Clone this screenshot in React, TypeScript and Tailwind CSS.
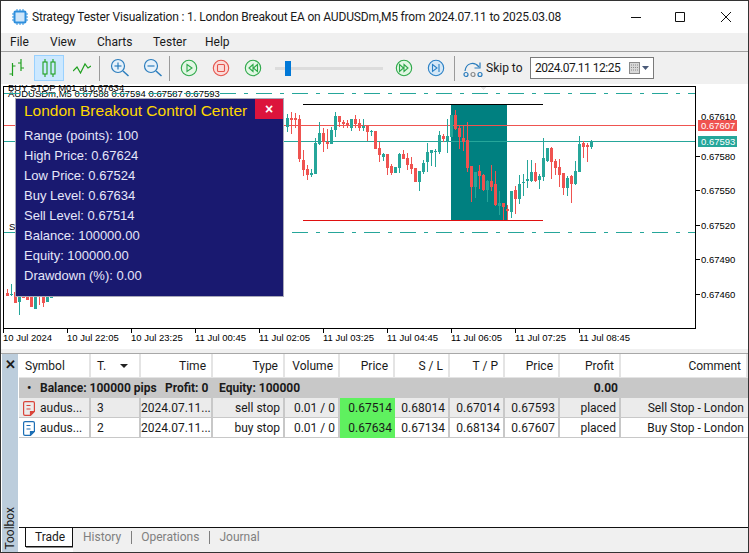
const ui = { fontFamily: 'Roboto, "Noto Sans", sans-serif' };

// [body top, body bottom, wick top, wick bottom, colour], y values measured at 3x from the chart's top
type Candle = [number, number, number, number, 'r' | 't'];

const candles: Candle[] = [
  [98, 126, 87, 140, 't'], [98, 105, 82, 147, 'r'], [98, 105, 85, 130, 'r'], [102, 222, 90, 232, 'r'],
  [225, 255, 195, 272, 'r'], [252, 270, 240, 285, 'r'], [263, 270, 252, 275, 't'], [174, 267, 158, 267, 't'],
  [144, 177, 111, 180, 't'], [144, 171, 130, 201, 'r'], [171, 177, 132, 192, 'r'], [135, 177, 125, 177, 't'],
  [93, 135, 81, 156, 't'], [93, 111, 93, 126, 'r'], [110, 117, 104, 129, 'r'], [114, 123, 105, 129, 'r'],
  [102, 129, 102, 138, 't'], [102, 117, 90, 129, 'r'], [114, 129, 102, 138, 'r'], [123, 129, 102, 138, 't'],
  [123, 141, 120, 168, 'r'], [137, 140, 135, 153, 't'], [138, 192, 138, 192, 'r'], [189, 210, 171, 231, 'r'],
  [207, 216, 204, 228, 't'], [207, 249, 207, 270, 'r'], [243, 264, 237, 270, 'r'], [246, 264, 246, 264, 't'],
  [207, 249, 204, 264, 't'], [207, 222, 195, 222, 'r'], [219, 240, 204, 255, 'r'], [237, 252, 216, 267, 'r'],
  [249, 291, 249, 291, 'r'], [258, 291, 258, 318, 't'], [234, 261, 225, 267, 't'], [201, 231, 174, 261, 't'],
  [195, 204, 195, 243, 't'], [198, 201, 192, 246, 't'], [150, 201, 138, 207, 't'], [153, 162, 147, 171, 'r'],
  [153, 171, 102, 204, 't'], [90, 156, 90, 156, 't'], [90, 132, 75, 135, 'r'], [129, 156, 120, 192, 'r'],
  [159, 171, 120, 198, 'r'], [165, 249, 111, 261, 'r'], [243, 306, 243, 351, 'r'], [261, 306, 261, 339, 't'],
  [258, 273, 240, 312, 'r'], [270, 315, 267, 318, 'r'], [288, 315, 285, 351, 't'], [288, 306, 240, 318, 'r'],
  [297, 360, 258, 363, 'r'], [354, 363, 318, 390, 't'], [354, 366, 354, 405, 'r'], [372, 378, 360, 405, 'r'],
  [318, 381, 318, 399, 't'], [315, 342, 303, 387, 'r'], [297, 342, 270, 357, 't'], [290, 293, 267, 333, 't'],
  [282, 288, 225, 309, 't'], [261, 288, 225, 291, 't'], [261, 288, 234, 291, 'r'], [273, 285, 267, 312, 't'],
  [219, 276, 159, 288, 't'], [189, 228, 189, 231, 't'], [189, 231, 186, 282, 'r'], [228, 249, 222, 270, 'r'],
  [246, 270, 222, 306, 'r'], [264, 309, 264, 330, 'r'], [279, 309, 273, 333, 't'], [273, 297, 270, 354, 'r'],
  [258, 297, 228, 300, 't'], [177, 261, 153, 261, 't'], [174, 186, 168, 219, 'r'], [180, 186, 174, 231, 'r'],
  [168, 186, 165, 192, 't'],
];

const leftCandles: Candle[] = [
  [625, 632, 612, 632, 'r'], [626, 629, 598, 632, 't'], [620, 654, 620, 654, 'r'], [620, 650, 620, 690, 't'],
  [620, 640, 620, 640, 'r'], [620, 645, 620, 645, 'r'], [620, 666, 620, 666, 'r'], [620, 672, 620, 672, 't'],
  [620, 622, 620, 660, 'r'], [620, 654, 620, 665, 'r'], [620, 650, 620, 650, 't'], [620, 640, 620, 640, 't'],
];

const priceLabels = [
  { y: 156, text: '0.67580' },
  { y: 190, text: '0.67550' },
  { y: 225, text: '0.67520' },
  { y: 259, text: '0.67490' },
  { y: 294, text: '0.67460' },
];

const timeLabels = [
  '10 Jul 2024', '10 Jul 22:05', '10 Jul 23:25', '11 Jul 00:45', '11 Jul 02:05',
  '11 Jul 03:25', '11 Jul 04:45', '11 Jul 06:05', '11 Jul 07:25', '11 Jul 08:45',
];

const panelRows = [
  'Range (points): 100',
  'High Price: 0.67624',
  'Low Price: 0.67524',
  'Buy Level: 0.67634',
  'Sell Level: 0.67514',
  'Balance: 100000.00',
  'Equity: 100000.00',
  'Drawdown (%): 0.00',
];

const columns = 'grid grid-cols-[72px_50px_72px_72px_55px_55px_55px_55px_55px_61px_1fr]';

const headers = [
  { label: 'Symbol', className: 'pl-[6px] text-left' },
  { label: 'T.', className: 'pl-[6px] text-left' },
  { label: 'Time', className: 'pr-[5px] text-right' },
  { label: 'Type', className: 'pr-[5px] text-right' },
  { label: 'Volume', className: 'pr-[5px] text-right' },
  { label: 'Price', className: 'pr-[5px] text-right' },
  { label: 'S / L', className: 'pr-[5px] text-right' },
  { label: 'T / P', className: 'pr-[5px] text-right' },
  { label: 'Price', className: 'pr-[5px] text-right' },
  { label: 'Profit', className: 'pr-[5px] text-right' },
  { label: 'Comment', className: 'pr-[5px] text-right' },
];

const orders = [
  { color: '#d9453a', bg: 'bg-[#ebebeb]', id: '3', type: 'sell stop', entry: '0.67514', sl: '0.68014', tp: '0.67014', price: '0.67593', comment: 'Sell Stop - London' },
  { color: '#1c6fb5', bg: 'bg-white', id: '2', type: 'buy stop', entry: '0.67634', sl: '0.67134', tp: '0.68134', price: '0.67607', comment: 'Buy Stop - London' },
];

const CandleMarks = ({ data, startX }: { data: Candle[]; startX: number }) => (
  <>
    {data.map(([top, bottom, wickTop, wickBottom, kind], i) => {
      const x = startX + i * 4;
      const fill = kind === 'r' ? '#ef5350' : '#26a69a';
      const bodyY = Math.round(85 + top / 3);
      const wickY = Math.round(85 + wickTop / 3);
      return (
        <g key={i} fill={fill}>
          <rect x={x} y={wickY} width={1} height={Math.round(85 + wickBottom / 3) - wickY} />
          <rect x={x - 1} y={bodyY} width={3} height={Math.max(1, Math.round(85 + bottom / 3) - bodyY)} />
        </g>
      );
    })}
  </>
);

const Chart = () => (
  <svg viewBox="1 84 747 265" width={747} height={265} className="block overflow-visible" shapeRendering="crispEdges" fontFamily='"Liberation Sans", sans-serif' fontSize={9.5} fill="#000">
    <text x={8} y={91}>BUY STOP M01 at 0.67634</text>
    <rect x={3.5} y={86.5} width={692} height={242} fill="none" stroke="#000" />
    <polygon points="480,87 487,87 483.5,90" fill="#e6e6e6" />
    <text x={8} y={97}>AUDUSDm,M5 0.67588 0.67594 0.67587 0.67593</text>
    <rect x={451} y={105} width={56} height={115} fill="#008080" />
    <line x1={303} x2={543} y1={104.5} y2={104.5} stroke="#000" />
    <line x1={303} x2={543} y1={220.5} y2={220.5} stroke="#e01010" />
    <line x1={4} x2={695} y1={93.5} y2={93.5} stroke="#26a69a" strokeDasharray="16 8 4 8" />
    <line x1={4} x2={695} y1={232.5} y2={232.5} stroke="#26a69a" strokeDasharray="16 8 4 8" />
    <line x1={4} x2={695} y1={125.5} y2={125.5} stroke="#ef5350" />
    <line x1={4} x2={695} y1={141.5} y2={141.5} stroke="#26a69a" />
    <text x={9} y={230}>S</text>
    <rect x={283} y={114} width={1} height={13} fill="#ef5350" />
    <CandleMarks data={candles} startX={287} />
    <CandleMarks data={leftCandles} startX={7} />
    {priceLabels.map((p) => (
      <g key={p.text}>
        <line x1={696} x2={700} y1={p.y + 0.5} y2={p.y + 0.5} stroke="#000" />
        <text x={701} y={p.y + 3.5}>{p.text}</text>
      </g>
    ))}
    <text x={701} y={120}>0.67610</text>
    <rect x={698} y={120} width={39} height={11} fill="#ef5350" />
    <text x={701} y={129} fill="#fff" fontSize={9.5}>0.67607</text>
    <rect x={698} y={136} width={39} height={11} fill="#26a69a" />
    <text x={701} y={145} fill="#fff" fontSize={9.5}>0.67593</text>
    {timeLabels.map((t, i) => (
      <g key={t}>
        <line x1={3.5 + i * 64} x2={3.5 + i * 64} y1={328} y2={333} stroke="#000" />
        <text x={3 + i * 64} y={341}>{t}</text>
      </g>
    ))}
  </svg>
);

const Panel = () => (
  <div className="absolute left-[14px] top-[14px] h-[199px] w-[269px] border border-[#a9a9b8] bg-[#191970]" style={{ fontFamily: '"Liberation Sans", sans-serif' }}>
    <div className="flex h-[25px] justify-between">
      <div className="whitespace-nowrap pl-[8px] pt-[1px] text-[15.500px] leading-[22px] text-[#ffd700]">London Breakout Control Center</div>
      <div className="flex h-[20px] w-[28px] items-center justify-center bg-[#dc143c] text-[14px] font-bold text-white">×</div>
    </div>
    <div className="pl-[8px] pt-[2px]">
      {panelRows.map((r) => (
        <div key={r} className="h-[20px] text-[13px] leading-[20px] text-[#e6e6fa]">{r}</div>
      ))}
    </div>
  </div>
);

const Dot = ({ color, fill, children }: { color: string; fill: string; children: React.ReactNode }) => (
  <svg width={18} height={18} viewBox="0 0 18 18" fill="none" stroke={color} strokeWidth={1.1}>
    <circle cx={9} cy={9} r={7.7} fill={fill} />
    {children}
  </svg>
);

const Magnifier = ({ plus }: { plus?: boolean }) => (
  <svg width={20} height={20} viewBox="0 0 20 20" fill="none" stroke="#2b7dbd" strokeWidth={1.2}>
    <circle cx={8} cy={8} r={6.5} fill="#e6f1fa" />
    <path d="M4.5 8h7" />
    {plus && <path d="M8 4.5v7" />}
    <path d="M13 13l5.5 5" strokeWidth={1.5} />
  </svg>
);

const Sep = ({ className }: { className: string }) => <div className={`h-[25px] w-px bg-[#9a9a9a] ${className}`} />;

const Toolbar = () => (
  <div className="flex h-[32px] items-center bg-[#f0f0f0]">
    <svg width={18} height={20} viewBox="0 0 18 20" fill="none" stroke="#1fa01f" strokeWidth={1.2} className="ml-[7px]">
      <path d="M4.5 5v13M1.500 16h3M4.500 8h3M13 1v12M10 5h3M13 10h3" />
    </svg>
    <div className="ml-[8px] flex h-[26px] w-[30px] items-center justify-center border border-[#99d1ff] bg-[#cce8ff]">
      <svg width={16} height={20} viewBox="0 0 16 20" fill="none" stroke="#1fa01f" strokeWidth={1.1}>
        <path d="M4 1v3M4 16v3M12 1v3M12 16v3" />
        <rect x={2} y={4} width={4} height={12} />
        <rect x={10} y={4} width={4} height={12} />
      </svg>
    </div>
    <svg width={18} height={12} viewBox="0 0 18 12" fill="none" stroke="#1fa01f" strokeWidth={1.2} className="ml-[9px]">
      <path d="M0 9l4-4 3.500 6L12 2l3 4 3-2" />
    </svg>
    <Sep className="ml-[8px]" />
    <div className="ml-[10px]"><Magnifier plus /></div>
    <div className="ml-[13px]"><Magnifier /></div>
    <Sep className="ml-[6px]" />
    <div className="ml-[10px]"><Dot color="#2ea84a" fill="#e2f7e4"><path d="M7 5.500l5 3.500-5 3.500z" /></Dot></div>
    <div className="ml-[14px]"><Dot color="#e5534b" fill="#fbdcda"><rect x={5.500} y={5.500} width={7} height={7} rx={1} /></Dot></div>
    <div className="ml-[14px]"><Dot color="#2ea84a" fill="#e2f7e4"><path d="M9 5.500L5 9l4 3.500zM13.500 5.500L9.500 9l4 3.500z" /></Dot></div>
    <div className="relative ml-[13px] h-[3px] w-[108px] bg-[#dcdcdc]">
      <div className="absolute left-[10px] top-[-6px] h-[15px] w-[6px] bg-[#0078d7]" />
    </div>
    <div className="ml-[12px]"><Dot color="#2ea84a" fill="#e2f7e4"><path d="M4.500 5.500L8.500 9l-4 3.500zM9 5.500L13 9l-4 3.500z" /></Dot></div>
    <div className="ml-[14px]"><Dot color="#2b80c5" fill="#d5e8f7"><path d="M5.500 5.500L10 9l-4.500 3.500zM12 5v8" /></Dot></div>
    <Sep className="ml-[9px]" />
    <svg width={20} height={20} viewBox="0 0 20 20" fill="none" stroke="#2b7dbd" strokeWidth={1.2} className="ml-[8px]">
      <path d="M2 13C3 5 11 3 16 9" />
      <path d="M17 4.500V10h-5.500" />
      <circle cx={3} cy={16.500} r={2} />
      <circle cx={10} cy={16.500} r={2} stroke="#8a8a8a" />
      <circle cx={17} cy={16.500} r={2} />
    </svg>
    <div className="ml-[3px] w-[36px] shrink-0 whitespace-nowrap text-[12px] text-[#1a1a1a]">Skip to</div>
    <div className="ml-[8px] flex h-[22px] w-[124px] shrink-0 items-center justify-between whitespace-nowrap border border-[#7a7a7a] bg-white pl-[4px] pr-[4px] text-[12px] tracking-[-0.5px] text-[#1a1a1a]">
      2024.07.11 12:25
      <svg width={20} height={12} viewBox="0 0 20 12" className="shrink-0">
        <rect x={0.500} y={0.500} width={10} height={11} fill="#d8d8d8" stroke="#8a8a8a" />
        <path d="M2 3h7M2 5.500h7M2 8h7" stroke="#8a8a8a" strokeDasharray="1 1" />
        <path d="M13 4h7l-3.500 4z" fill="#4a5a78" />
      </svg>
    </div>
  </div>
);

const OrderIcon = ({ color }: { color: string }) => (
  <svg width={12} height={15} viewBox="0 0 12 15" fill="none" stroke={color} strokeWidth={1.2} className="shrink-0">
    <path d="M2 .6h8a1.400 1.400 0 0 1 1.400 1.400v8.500L7.500 14.400H2A1.400 1.400 0 0 1 .6 13V2A1.400 1.400 0 0 1 2 .6z" />
    <path d="M3.500 4.500h4M3.500 8h4" />
    <path d="M7.500 14V10.500h4" fill={color} />
  </svg>
);

const Toolbox = () => (
  <div className="flex h-[199px] border-t border-[#a8a8a8] text-[12px] leading-[20px] text-[#1a1a1a]">
    <div className="ml-[1px] flex w-[16px] flex-col items-center justify-between bg-[#bccddc] pb-[2px]">
      <span className="mt-[2px] text-[13px] font-bold leading-[18px]">✕</span>
      <span className="rotate-180 [writing-mode:vertical-rl]">Toolbox</span>
    </div>
    <div className="flex min-w-0 flex-1 flex-col pl-px">
      <div className={`${columns} h-[24px] border-b border-[#e4e4e4]`}>
        {headers.map((h, i) => (
          <div key={i} className={`relative border-r-2 border-[#e4e4e4] leading-[24px] ${h.className}`}>
            {h.label}
            {h.label === 'T.' && <span className="absolute right-[11px] top-[10px] h-0 w-0 border-x-[4px] border-t-[4px] border-x-transparent border-t-[#222]" />}
          </div>
        ))}
      </div>
      <div className={`${columns} h-[20px] bg-[#c8c8c8] font-bold`}>
        <div className="col-span-9 flex pl-[8px]">
          <span className="w-[13px]">•</span>
          <span className="w-[125px]">Balance: 100000 pips</span>
          <span className="w-[54px]">Profit: 0</span>
          <span>Equity: 100000</span>
        </div>
        <div className="pr-[3px] text-right">0.00</div>
      </div>
      {orders.map((o) => (
        <div key={o.id} className={`${columns} h-[20px] border-b border-[#c8c8c8] ${o.bg}`}>
          <div className="flex items-center gap-[5px] border-r-2 border-[#c8c8c8] pl-[4px]"><OrderIcon color={o.color} />audus...</div>
          <div className="border-r-2 border-[#c8c8c8] pl-[6px]">{o.id}</div>
          <div className="border-r-2 border-[#c8c8c8] pr-[3px] text-right">2024.07.11...</div>
          <div className="border-r-2 border-[#c8c8c8] pr-[3px] text-right">{o.type}</div>
          <div className="border-r-2 border-[#c8c8c8] pr-[3px] text-right">0.01 / 0</div>
          <div className="bg-[#5ff15f] pr-[3px] text-right">{o.entry}</div>
          <div className="border-r-2 border-[#c8c8c8] pr-[3px] text-right">{o.sl}</div>
          <div className="border-r-2 border-[#c8c8c8] pr-[3px] text-right">{o.tp}</div>
          <div className="border-r-2 border-[#c8c8c8] pr-[3px] text-right">{o.price}</div>
          <div className="border-r-2 border-[#c8c8c8] pr-[3px] text-right">placed</div>
          <div className="pr-[4px] text-right">{o.comment}</div>
        </div>
      ))}
      <div className="flex-1" />
      <div className="flex h-[25px] border-t border-[#111]">
        <div className="w-[6px]" />
        <div className="h-[19px] w-[48px] border-x border-b border-[#111] bg-white pl-[9px] leading-[18px] shadow-[1px_1px_0_#888]">Trade</div>
        <div className="flex flex-1 bg-[#f0f0f0] pl-[10px] leading-[18px] text-[#7f7f7f]">
          <span>History</span>
          <span className="ml-[10px] mt-[3px] h-[13px] w-px bg-[#7f7f7f]" />
          <span className="ml-[9px]">Operations</span>
          <span className="ml-[10px] mt-[3px] h-[13px] w-px bg-[#7f7f7f]" />
          <span className="ml-[9px]">Journal</span>
        </div>
      </div>
    </div>
  </div>
);

export default function App() {
  return (
    <div className="flex h-[553px] w-[749px] flex-col overflow-hidden border border-[#333] bg-white" style={ui}>
      <div className="flex h-[32px] items-center">
        <svg width={16} height={16} viewBox="0 0 16 16" className="ml-[11px]" fill="none" stroke="#2f8fdd">
          <rect x={2.500} y={2.500} width={11} height={11} rx={1} fill="#cfe6fa" strokeWidth={2} />
          <path d="M5 0v2M8 0v2M11 0v2M5 14v2M8 14v2M11 14v2M0 5h2M0 8h2M0 11h2M14 5h2M14 8h2M14 11h2" />
        </svg>
        <div className="ml-[4px] flex-1 text-[12px] tracking-[-0.18px] text-[#1a1a1a]">Strategy Tester Visualization : 1. London Breakout EA on AUDUSDm,M5 from 2024.07.11 to 2025.03.08</div>
        <svg width={100} height={12} viewBox="0 0 100 12" fill="none" stroke="#111" className="mr-[17px]">
          <path d="M0 6.500h10M44.500 1.500h9v9h-9zM90 1l10 10M100 1L90 11" />
        </svg>
      </div>
      <div className="flex h-[19px] items-center border-b border-[#a0a0a0] bg-[#f0f0f0] pl-[9px] text-[12px] text-[#1a1a1a]">
        <span className="w-[40px]">File</span>
        <span className="w-[47px]">View</span>
        <span className="w-[56px]">Charts</span>
        <span className="w-[52px]">Tester</span>
        <span>Help</span>
      </div>
      <Toolbar />
      <div className="relative h-[265px] shrink-0">
        <Chart />
        <Panel />
      </div>
      <div className="h-[4px] shrink-0 bg-[#f0f0f0]" />
      <Toolbox />
    </div>
  );
}
